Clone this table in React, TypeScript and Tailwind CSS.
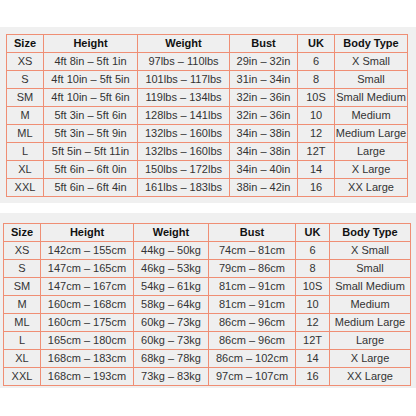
import React from 'react'

type Row = [string, string, string, string, string, string]

const imperial: Row[] = [
  ['XS', '4ft 8in – 5ft 1in', '97lbs – 110lbs', '29in – 32in', '6', 'X Small'],
  ['S', '4ft 10in – 5ft 5in', '101lbs – 117lbs', '31in – 34in', '8', 'Small'],
  ['SM', '4ft 10in – 5ft 6in', '119lbs – 134lbs', '32in – 36in', '10S', 'Small Medium'],
  ['M', '5ft 3in – 5ft 6in', '128lbs – 141lbs', '32in – 36in', '10', 'Medium'],
  ['ML', '5ft 3in – 5ft 9in', '132lbs – 160lbs', '34in – 38in', '12', 'Medium Large'],
  ['L', '5ft 5in – 5ft 11in', '132lbs – 160lbs', '34in – 38in', '12T', 'Large'],
  ['XL', '5ft 6in – 6ft 0in', '150lbs – 172lbs', '34in – 40in', '14', 'X Large'],
  ['XXL', '5ft 6in – 6ft 4in', '161lbs – 183lbs', '38in – 42in', '16', 'XX Large'],
]

const metric: Row[] = [
  ['XS', '142cm – 155cm', '44kg – 50kg', '74cm – 81cm', '6', 'X Small'],
  ['S', '147cm – 165cm', '46kg – 53kg', '79cm – 86cm', '8', 'Small'],
  ['SM', '147cm – 167cm', '54kg – 61kg', '81cm – 91cm', '10S', 'Small Medium'],
  ['M', '160cm – 168cm', '58kg – 64kg', '81cm – 91cm', '10', 'Medium'],
  ['ML', '160cm – 175cm', '60kg – 73kg', '86cm – 96cm', '12', 'Medium Large'],
  ['L', '165cm – 180cm', '60kg – 73kg', '86cm – 96cm', '12T', 'Large'],
  ['XL', '168cm – 183cm', '68kg – 78kg', '86cm – 102cm', '14', 'X Large'],
  ['XXL', '168cm – 193cm', '73kg – 83kg', '97cm – 107cm', '16', 'XX Large'],
]

const headers = ['Size', 'Height', 'Weight', 'Bust', 'UK', 'Body Type']

const cell = 'border border-[#ef8e74] p-0 text-center whitespace-nowrap'

const SizeTable = ({ rows, widths }: { rows: Row[]; widths: number[] }) => (
  <table className="table-fixed border-collapse bg-[#efefef] text-[11px] leading-[17px] text-[#333]">
    <colgroup>
      {widths.map((w, i) => (
        <col key={i} style={{ width: w }} />
      ))}
    </colgroup>
    <thead>
      <tr className="h-[18px]">
        {headers.map((h) => (
          <th key={h} className={`${cell} font-bold text-[#111]`}>
            {h}
          </th>
        ))}
      </tr>
    </thead>
    <tbody>
      {rows.map((r) => (
        <tr key={r[0]} className="h-[18px]">
          {r.map((v, i) => (
            <td key={i} className={cell}>
              {v}
            </td>
          ))}
        </tr>
      ))}
    </tbody>
  </table>
)

export default function App() {
  return (
    <div className="h-[416px] w-[416px] bg-white pt-[27px] font-['Liberation_Sans',Arial,sans-serif]">
      <div className="h-[176px] bg-[#f0f0f0] pt-[7px] pl-[6px]">
        <SizeTable rows={imperial} widths={[37, 94, 92, 68, 37, 73]} />
      </div>
      <div className="mt-[10px] h-[175px] bg-[#f0f0f0] pt-[10px] pl-[3px]">
        <SizeTable rows={metric} widths={[37, 93, 75, 87, 34, 81]} />
      </div>
    </div>
  )
}
